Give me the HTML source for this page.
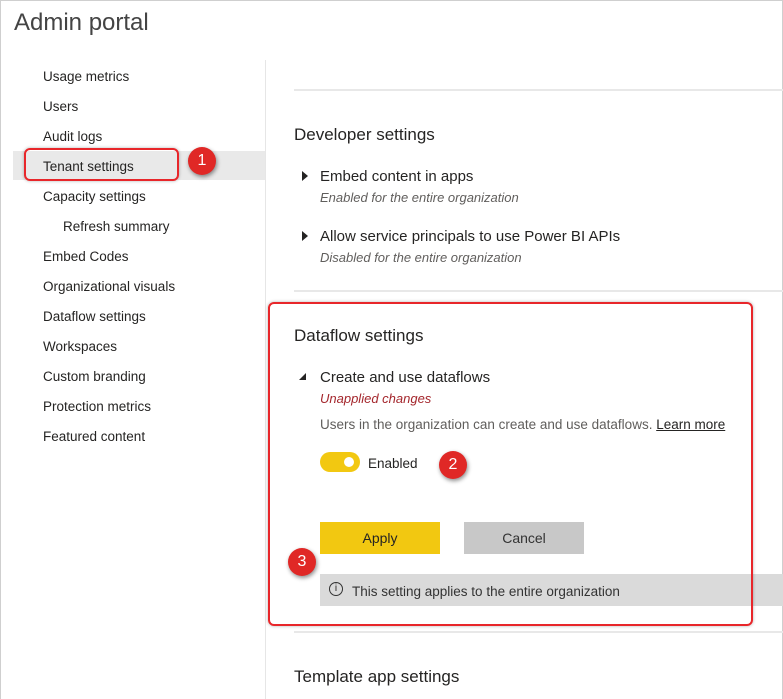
<!DOCTYPE html>
<html><head><style>
*{margin:0;padding:0;box-sizing:border-box}
body{width:783px;height:699px;position:relative;background:#fff;font-family:"Liberation Sans",sans-serif;color:#252423;overflow:hidden}
.a{position:absolute;white-space:nowrap}
.nav{font-size:13.5px;color:#252423}
.h{font-size:17px;color:#252423}
.t{font-size:15px;color:#252423}
.s{font-size:13px;font-style:italic;color:#605e5c}
.badge{position:absolute;width:28px;height:28px;border-radius:50%;background:#e02826;color:#fff;font-size:16px;text-align:center;line-height:28px;box-shadow:1px 2px 4px rgba(0,0,0,.45)}
.line{position:absolute;height:2px;background:#e8e8e8}
.tri{position:absolute;width:0;height:0}
</style></head><body>
<div class="a" style="left:0;top:0;width:783px;height:699px;border:1px solid #cfcfcf;border-bottom:none"></div>
<div class="a" style="left:14px;top:9px;font-size:24px;color:#444">Admin portal</div>
<div class="a" style="left:265px;top:60px;width:1px;height:639px;background:#e6e6e6"></div>
<div class="a" style="left:13px;top:151px;width:252px;height:29px;background:#e9e9e9"></div>
<div class="a" style="left:24px;top:148px;width:155px;height:33px;border:2px solid #e8262a;border-radius:6px;box-shadow:0 0 3px rgba(0,0,0,.3)"></div>
<div class="badge" style="left:188px;top:147px">1</div>
<div class="a nav" style="left:43px;top:69px">Usage metrics</div>
<div class="a nav" style="left:43px;top:99px">Users</div>
<div class="a nav" style="left:43px;top:129px">Audit logs</div>
<div class="a nav" style="left:43px;top:159px">Tenant settings</div>
<div class="a nav" style="left:43px;top:189px">Capacity settings</div>
<div class="a nav" style="left:63px;top:219px">Refresh summary</div>
<div class="a nav" style="left:43px;top:249px">Embed Codes</div>
<div class="a nav" style="left:43px;top:279px">Organizational visuals</div>
<div class="a nav" style="left:43px;top:309px">Dataflow settings</div>
<div class="a nav" style="left:43px;top:339px">Workspaces</div>
<div class="a nav" style="left:43px;top:369px">Custom branding</div>
<div class="a nav" style="left:43px;top:399px">Protection metrics</div>
<div class="a nav" style="left:43px;top:429px">Featured content</div>

<div class="line" style="left:294px;top:89px;width:489px"></div>
<div class="a h" style="left:294px;top:125px">Developer settings</div>
<div class="tri" style="left:302px;top:171px;border-left:6px solid #252423;border-top:5px solid transparent;border-bottom:5px solid transparent"></div>
<div class="a t" style="left:320px;top:168px">Embed content in apps</div>
<div class="a s" style="left:320px;top:190px">Enabled for the entire organization</div>
<div class="tri" style="left:302px;top:231px;border-left:6px solid #252423;border-top:5px solid transparent;border-bottom:5px solid transparent"></div>
<div class="a t" style="left:320px;top:228px">Allow service principals to use Power BI APIs</div>
<div class="a s" style="left:320px;top:250px">Disabled for the entire organization</div>
<div class="line" style="left:294px;top:290px;width:489px"></div>

<div class="a" style="left:320px;top:574px;width:463px;height:32px;background:#dadada"></div>
<div class="a" style="left:268px;top:302px;width:485px;height:324px;border:2px solid #e8262a;border-radius:6px;box-shadow:0 0 3px rgba(0,0,0,.3)"></div>
<div class="a h" style="left:294px;top:326px">Dataflow settings</div>
<div class="tri" style="left:299px;top:373px;border-right:7px solid #252423;border-top:7px solid transparent"></div>
<div class="a t" style="left:320px;top:369px">Create and use dataflows</div>
<div class="a s" style="left:320px;top:391px;color:#a4262c">Unapplied changes</div>
<div class="a" style="left:320px;top:417px;font-size:13.5px;color:#605e5c">Users in the organization can create and use dataflows. <span style="color:#252423;text-decoration:underline">Learn more</span></div>
<div class="a" style="left:320px;top:452px;width:40px;height:20px;border-radius:10px;background:#f2c811"></div>
<div class="a" style="left:344px;top:457px;width:10px;height:10px;border-radius:50%;background:#fff"></div>
<div class="a" style="left:368px;top:456px;font-size:13.5px;color:#252423">Enabled</div>
<div class="badge" style="left:439px;top:451px">2</div>
<div class="a" style="left:320px;top:522px;width:120px;height:32px;background:#f2c811;font-size:14px;text-align:center;line-height:33px">Apply</div>
<div class="a" style="left:464px;top:522px;width:120px;height:32px;background:#c8c8c8;font-size:14px;text-align:center;line-height:33px;color:#333">Cancel</div>
<div class="badge" style="left:288px;top:548px">3</div>
<div class="a" style="left:329px;top:582px;width:14px;height:14px;border:1px solid #333;border-radius:50%;font-size:10px;text-align:center;line-height:12px">i</div>
<div class="a" style="left:352px;top:584px;font-size:13.5px;color:#333">This setting applies to the entire organization</div>
<div class="line" style="left:294px;top:631px;width:489px"></div>
<div class="a h" style="left:294px;top:667px">Template app settings</div>
</body></html>
